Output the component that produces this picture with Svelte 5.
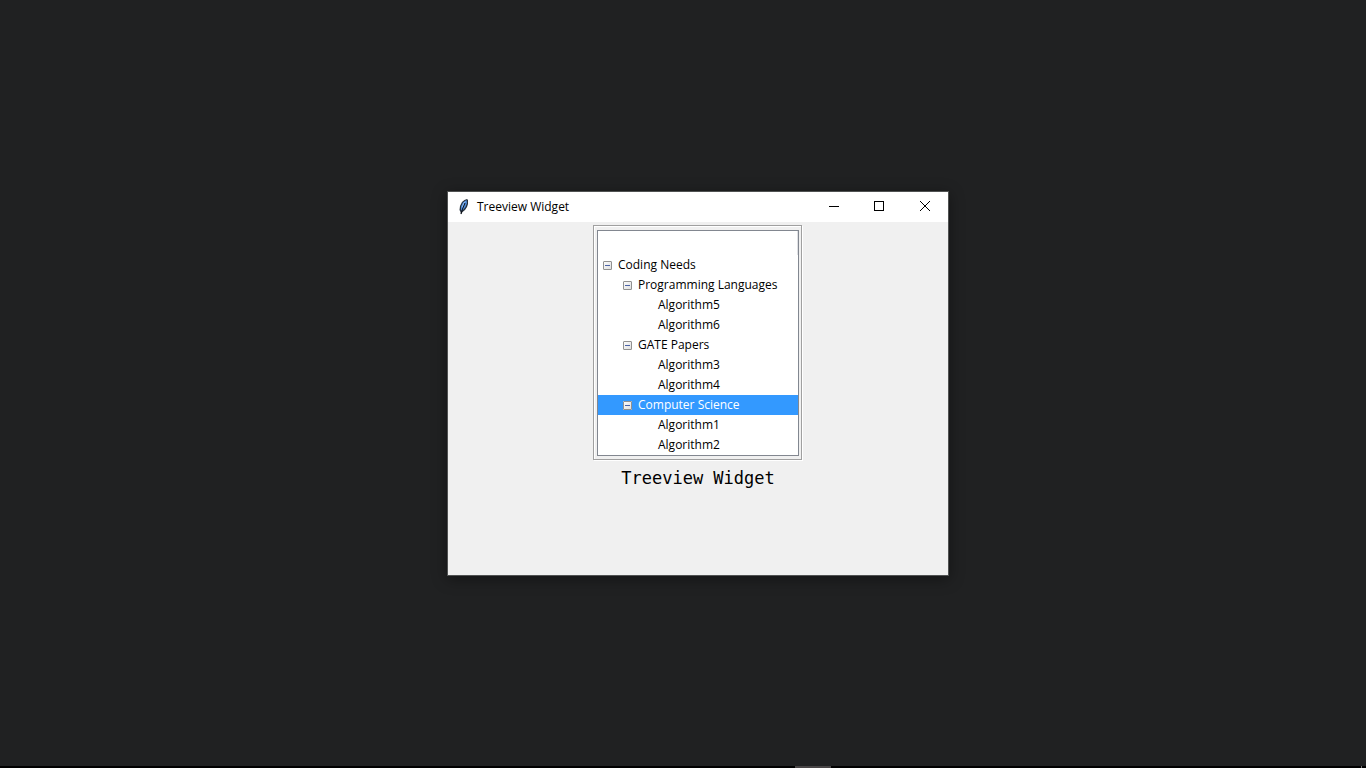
<script>
  let nodes = $state([
    { label: 'Coding Needs', depth: 0, parent: -1, open: true },
    { label: 'Programming Languages', depth: 1, parent: 0, open: true },
    { label: 'Algorithm5', depth: 2, parent: 1 },
    { label: 'Algorithm6', depth: 2, parent: 1 },
    { label: 'GATE Papers', depth: 1, parent: 0, open: true },
    { label: 'Algorithm3', depth: 2, parent: 4 },
    { label: 'Algorithm4', depth: 2, parent: 4 },
    { label: 'Computer Science', depth: 1, parent: 0, open: true },
    { label: 'Algorithm1', depth: 2, parent: 7 },
    { label: 'Algorithm2', depth: 2, parent: 7 }
  ]);
  let selected = $state(7);

  function visible(node) {
    let p = node.parent;
    while (p >= 0) {
      if (!nodes[p].open) return false;
      p = nodes[p].parent;
    }
    return true;
  }
</script>

<div class="desktop">
  <main class="stage">
    <section class="window">
      <header class="titlebar">
        <svg class="feather" width="16" height="16" viewBox="0 0 16 16" aria-hidden="true">
          <path d="M11 0 12 1 12 5 11 8 9 11 6.5 13 5 15.5 4.5 13 3.5 11 4 7 6 3 8.5 1Z" fill="#26303c" />
          <path d="M10.5 1 11 4 9.5 8 7 11 5 11.5 5 7.5 7 3.5Z" fill="#4f8cdb" />
          <path d="M10 1.5 7.5 4 6 7.5 6 9 8 6Z" fill="#93bff5" />
          <path d="M9 4 6.5 10 5 15" fill="none" stroke="#0b0f16" />
        </svg>
        <h1>Treeview Widget</h1>
        <div class="controls">
          <button class="minimize" aria-label="Minimize">
            <svg width="10" height="10" shape-rendering="crispEdges"><path d="M0 5.5H10" /></svg>
          </button>
          <button aria-label="Maximize">
            <svg width="10" height="10" shape-rendering="crispEdges"><path d="M.5 .5H9.5V9.5H.5Z" /></svg>
          </button>
          <button aria-label="Close">
            <svg width="10" height="10"><path d="M0 0 10 10M10 0 0 10" /></svg>
          </button>
        </div>
      </header>
      <div class="content">
        <div class="groove">
          <div class="tree">
            <div class="heading"></div>
            <ul role="tree" aria-label="Treeview Widget">
              {#each nodes as node, i}
                {#if visible(node)}
                  <li role="treeitem" aria-level={node.depth + 1} aria-selected={selected === i}
                    class="depth{node.depth}" class:selected={selected === i}>
                    {#if node.open !== undefined}
                      <button class="toggle" aria-label="Toggle {node.label}" onclick={() => (node.open = !node.open)}>
                        <svg width="9" height="9" shape-rendering="crispEdges">
                          <path d="M2 4.5H7" />
                          {#if !node.open}<path d="M4.5 2V7" />{/if}
                        </svg>
                      </button>
                    {/if}
                    <button class="item" onclick={() => (selected = i)}>{node.label}</button>
                  </li>
                {/if}
              {/each}
            </ul>
          </div>
        </div>
        <p class="caption">Treeview Widget</p>
      </div>
    </section>
  </main>
  <footer class="taskbar"><span class="active"></span><span class="edge"></span></footer>
</div>

<style>
  :global(body) {
    margin: 0;
    background: #202122;
  }
  .desktop {
    display: flex;
    flex-direction: column;
    min-height: 100vh;
    background: #202122;
    color: #000;
    font: 12px/20px "Open Sans", "Noto Sans", sans-serif;
  }
  .stage {
    flex: 1;
    display: flex;
    align-items: center;
    justify-content: center;
    padding-left: 30px;
  }
  .window {
    width: 500px;
    max-width: 100%;
    border: 1px solid #505252;
    background: #f0f0f0;
    box-shadow: 0 3px 14px rgba(0, 0, 0, 0.4);
  }
  .titlebar {
    display: flex;
    align-items: center;
    height: 30px;
    padding-left: 8px;
    background: #fff;
  }
  .feather {
    margin-right: 5px;
  }
  h1 {
    flex: 1;
    margin: 0;
    font-size: 12px;
    font-weight: 400;
  }
  button {
    border: 0;
    padding: 0;
    background: none;
    color: inherit;
    font: inherit;
  }
  .controls {
    display: flex;
    align-self: flex-start;
  }
  .controls button {
    display: flex;
    align-items: center;
    justify-content: center;
    width: 46px;
    height: 28px;
  }
  .controls .minimize {
    width: 44px;
  }
  .controls path {
    fill: none;
    stroke: #000;
  }
  .content {
    display: flex;
    flex-direction: column;
    align-items: center;
    min-height: 350px;
    padding-top: 3px;
  }
  .groove {
    margin-right: 1px;
    border: 1px solid #a0a0a0;
    box-shadow: inset 1px 1px #fff, 1px 1px #fff;
    padding: 4px 2px 3px 3px;
  }
  .tree {
    width: 200px;
    border: 1px solid #828790;
    background: #fff;
  }
  .heading {
    height: 24px;
    border-right: 1px solid #dfe0e4;
  }
  ul {
    margin: 0;
    padding: 0;
    list-style: none;
  }
  li {
    display: flex;
    align-items: center;
    height: 20px;
    padding-left: 5px;
  }
  .depth1 {
    padding-left: 25px;
  }
  .depth2 {
    padding-left: 60px;
  }
  .selected {
    background: #3399ff;
    color: #fff;
  }
  .toggle {
    display: flex;
    flex: none;
    margin: 1px 6px 0 0;
    border-radius: 1px;
    background: linear-gradient(135deg, #fff, #dcdcdc);
    outline: 1px solid #919191;
    outline-offset: -1px;
  }
  .toggle path {
    fill: none;
    stroke: #4b63a7;
  }
  .item {
    flex: 1;
    text-align: left;
    white-space: nowrap;
  }
  .caption {
    margin: 8px 0 0;
    font: 17px/20px "DejaVu Sans Mono", monospace;
  }
  .taskbar {
    display: flex;
    justify-content: flex-end;
    height: 2px;
    background: #000;
  }
  .active {
    width: 36px;
    background: #484546;
  }
  .edge {
    width: 1px;
    margin: 0 4px 0 530px;
    background: #777;
  }
</style>
